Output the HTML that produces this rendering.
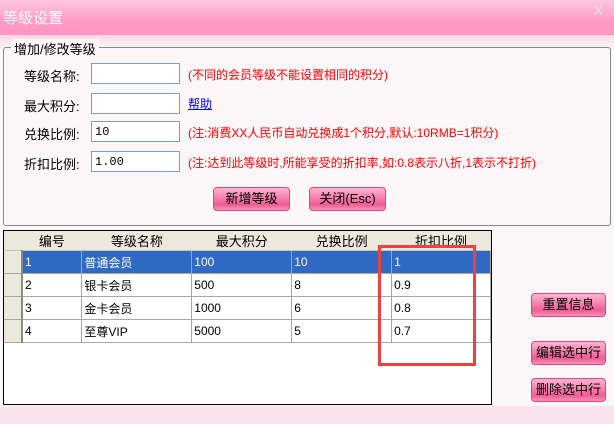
<!DOCTYPE html><html><head><meta charset="utf-8"><style>
*{margin:0;padding:0;box-sizing:border-box}
body{width:614px;height:424px;overflow:hidden;background:#fbf6f8;font:12px "Liberation Sans","Noto Sans CJK SC",sans-serif;position:relative;color:#000}
.a{position:absolute}
.title{left:0;top:0;width:614px;height:36px;background:linear-gradient(#ffc6de,#ff9cc6 60%,#ff94c0);border-bottom:1px solid #f8d0e0}
.title span{position:absolute;left:3px;top:7px;color:#fff;font-size:15px}
.glow{left:0;top:36px;width:614px;height:14px;background:linear-gradient(#f9dbe7,#fbf6f8)}
.gb{left:3px;top:47px;width:608px;height:179px;border:1px solid #888;border-radius:3px}
.leg{left:11px;top:39px;background:#fbf6f8;padding:0 3px;font-size:13px}
.lbl{font-size:13px}
.inp{width:89px;height:21px;border:1px solid #7f9db9;background:#fff;font-size:12px;padding:3px 0 0 3px;font-family:"Liberation Mono","Noto Sans CJK SC",monospace}
.red{color:#f00;font-size:12px}
.btn{height:24px;border:1px solid #e0457f;border-radius:4px;background:linear-gradient(#ffb6d2,#f57aa8 50%,#ef5c94 75%,#f792b9);text-align:center;line-height:22px;font-size:13px}
.grid{left:3px;top:230px;width:489px;height:175px;border:1px solid #000;background:#fff}
table{border-collapse:collapse;position:absolute;left:0;top:0}
td{height:23px;border-right:1px solid #a8a8a0;border-bottom:1px solid #a8a8a0;padding-left:2px;font-size:12px}
th{height:18px;background:#ebe9dc;font-weight:normal;font-size:13px;border-bottom:1px solid #c8c4b0}
.rh{background:#ebe9dc;width:18px;padding:0;border-right:2px solid #888}
.sel td{background:#316ac5;color:#fff}
.sel td.rh{background:#ebe9dc}
</style></head><body>
<div class="a title"><span>等级设置</span><span style="left:594px;top:3px;font-size:13px;color:#ddd;font-weight:bold">X</span></div>
<div class="a glow"></div>
<div class="a gb"></div>
<div class="a leg">增加/修改等级</div>
<div class="a lbl" style="left:24px;top:66px">等级名称:</div>
<div class="a inp" style="left:91px;top:63px"></div>
<div class="a red" style="left:188px;top:66px">(不同的会员等级不能设置相同的积分)</div>
<div class="a lbl" style="left:24px;top:96px">最大积分:</div>
<div class="a inp" style="left:91px;top:93px"></div>
<div class="a" style="left:188px;top:95px;color:#00f;text-decoration:underline;font-size:12px">帮助</div>
<div class="a lbl" style="left:24px;top:124px">兑换比例:</div>
<div class="a inp" style="left:91px;top:121px">10</div>
<div class="a red" style="left:188px;top:124px">(注:消费XX人民币自动兑换成1个积分,默认:10RMB=1积分)</div>
<div class="a lbl" style="left:24px;top:154px">折扣比例:</div>
<div class="a inp" style="left:91px;top:151px">1.00</div>
<div class="a red" style="left:188px;top:154px">(注:达到此等级时,所能享受的折扣率,如:0.8表示八折,1表示不打折)</div>
<div class="a btn" style="left:213px;top:187px;width:77px">新增等级</div>
<div class="a btn" style="left:309px;top:187px;width:77px">关闭(Esc)</div>
<div class="a grid"><table>
<tr><th class="rh" style="border-right:none"></th><th style="width:60px">编号</th><th style="width:110px">等级名称</th><th style="width:100px">最大积分</th><th style="width:100px">兑换比例</th><th style="width:99px">折扣比例</th></tr>
<tr class="sel"><td class="rh"></td><td>1</td><td>普通会员</td><td>100</td><td>10</td><td>1</td></tr>
<tr><td class="rh"></td><td>2</td><td>银卡会员</td><td>500</td><td>8</td><td>0.9</td></tr>
<tr><td class="rh"></td><td>3</td><td>金卡会员</td><td>1000</td><td>6</td><td>0.8</td></tr>
<tr><td class="rh"></td><td>4</td><td>至尊VIP</td><td>5000</td><td>5</td><td>0.7</td></tr>
</table></div>
<div class="a" style="left:378px;top:245px;width:98px;height:121px;border:3px solid #f04040"></div>
<div class="a btn" style="left:531px;top:293px;width:75px">重置信息</div>
<div class="a btn" style="left:531px;top:341px;width:75px">编辑选中行</div>
<div class="a btn" style="left:531px;top:378px;width:75px">删除选中行</div>
<div class="a" style="left:0;top:406px;width:614px;height:18px;background:#fbe4ef"></div>
</body></html>
